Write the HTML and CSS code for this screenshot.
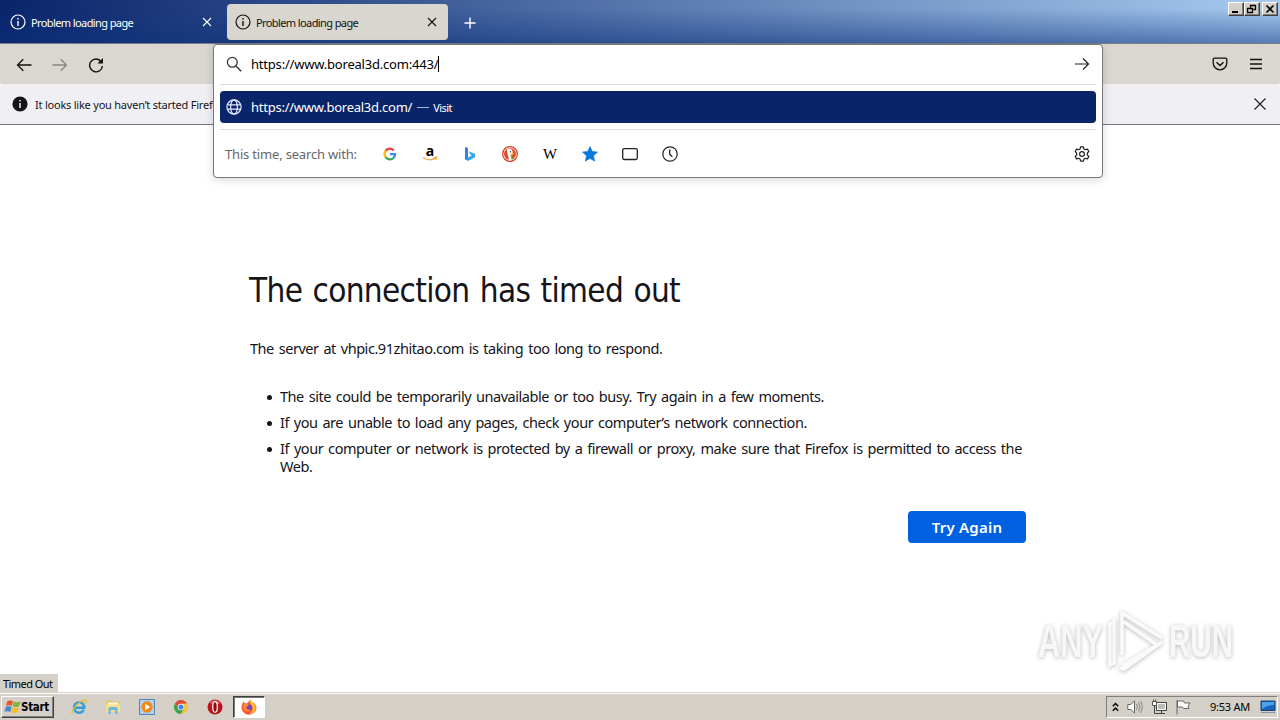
FILE: index.html
```html
<!DOCTYPE html>
<html lang="en">
<head>
<meta charset="utf-8">
<title>Problem loading page</title>
<link rel="stylesheet" href="styles.css">
</head>
<body>
<header class="tabs">
  <div class="tab">
    <svg class="i16" viewBox="0 0 16 16"><circle cx="8" cy="8" r="7" fill="none" stroke="currentColor" stroke-width="1.2"/><path d="M8 7v5M8 4v1.4" stroke="currentColor" stroke-width="1.4"/></svg>
    <span class="tab-title">Problem loading page</span>
    <svg class="close" viewBox="0 0 10 10"><path d="M1 1l8 8M9 1l-8 8" stroke="currentColor" stroke-width="1.1"/></svg>
  </div>
  <div class="tab active">
    <svg class="i16" viewBox="0 0 16 16"><circle cx="8" cy="8" r="7" fill="none" stroke="currentColor" stroke-width="1.2"/><path d="M8 7v5M8 4v1.4" stroke="currentColor" stroke-width="1.4"/></svg>
    <span class="tab-title">Problem loading page</span>
    <svg class="close" viewBox="0 0 10 10"><path d="M1 1l8 8M9 1l-8 8" stroke="currentColor" stroke-width="1.1"/></svg>
  </div>
  <svg class="plus" viewBox="0 0 12 12"><path d="M6 .5v11M.5 6h11" stroke="#fff" stroke-width="1.4"/></svg>
  <div class="controls">
    <span class="ctl"><svg viewBox="0 0 12 10"><path d="M2 8h6" stroke="#000" stroke-width="2"/></svg></span>
    <span class="ctl"><svg viewBox="0 0 12 10"><path d="M4.500 3.500v-2h5v4h-2M4 1.500h6M1.500 4.500h5v4h-5zM1 4.500h6" fill="none" stroke="#000" stroke-width="1.3"/></svg></span>
    <span class="ctl last"><svg viewBox="0 0 12 10"><path d="M2.500 1.500l7 7M9.500 1.500l-7 7" stroke="#000" stroke-width="1.7"/></svg></span>
  </div>
</header>

<nav class="toolbar">
  <svg class="i16" viewBox="0 0 16 16"><path d="M15.500 8H1.500M7.300 2.200L1.500 8l5.800 5.800" fill="none" stroke="#111" stroke-width="1.3"/></svg>
  <svg class="i16 dim" viewBox="0 0 16 16"><path d="M.5 8h14M8.700 2.200L14.500 8l-5.800 5.800" fill="none" stroke="#111" stroke-width="1.3"/></svg>
  <svg class="i16" viewBox="0 0 16 16"><path d="M13.300 4.800A6.400 6.400 0 1 0 14.400 9" fill="none" stroke="#111" stroke-width="1.4"/><path d="M15 1v5.600H9.400z" fill="#111"/></svg>
  <span class="grow"></span>
  <svg class="i16 high" viewBox="0 0 16 16"><path d="M2.500 2.200h11a1.300 1.300 0 0 1 1.300 1.300V7a6.800 6.800 0 0 1-13.600 0V3.500a1.300 1.300 0 0 1 1.300-1.300z" fill="none" stroke="#111" stroke-width="1.300"/><path d="M4.500 6.200L8 9.500l3.500-3.300" fill="none" stroke="#111" stroke-width="1.400"/></svg>
  <svg class="i16 high" viewBox="0 0 16 16"><path d="M2 3.500h12M2 8h12M2 12.500h12" stroke="#111" stroke-width="1.400"/></svg>
</nav>

<div class="notice">
  <svg class="i16" viewBox="0 0 16 16"><circle cx="8" cy="8" r="7.600" fill="#15141a"/><path d="M8 7v5M8 4v1.500" stroke="#fff" stroke-width="1.400"/></svg>
  <span class="notice-text">It looks like you haven’t started Firefox</span>
  <svg class="notice-close" viewBox="0 0 12 12"><path d="M.5 .5l11 11M11.500 .5l-11 11" stroke="#222" stroke-width="1.200"/></svg>
</div>

<main class="page">
  <h1>The connection has timed out</h1>
  <p class="lead">The server at vhpic.91zhitao.com is taking too long to respond.</p>
  <ul>
    <li class="l1">The site could be temporarily unavailable or too busy. Try again in a few moments.</li>
    <li class="l2">If you are unable to load any pages, check your computer’s network connection.</li>
    <li class="l3">If your computer or network is protected by a firewall or proxy, make sure that Firefox is permitted to access the<br>Web.</li>
  </ul>
  <div class="actions"><button class="retry">Try Again</button></div>
</main>

<footer class="taskbar">
  <div class="start">
    <svg class="flag" viewBox="0 0 17 16"><path d="M3.200 2.500Q6 .5 9 2.300L7.800 7Q5 5.600 2 7z" fill="#e8562a"/><path d="M9.800 2.600Q13 4 16.500 2.500L15 7.500Q12 8.800 8.600 7.300z" fill="#7fb53c"/><path d="M1.800 8Q5 6.500 7.600 8L6.300 13Q3.500 11.500.5 12.800z" fill="#3f86d8"/><path d="M8.400 8.300Q11.500 9.700 14.700 8.400L13.400 13.500Q10 14.800 7.100 13.300z" fill="#f6bd26"/></svg>
    <span class="start-text">Start</span>
  </div>
  <div class="apps">
    <svg viewBox="0 0 16 16"><path d="M12.800 10.800A5.200 5.200 0 1 1 13.300 8.700H4" fill="none" stroke="#2f9fdf" stroke-width="2.400"/><path d="M1.200 14.500C-.5 11 11-.5 15 1.500c1 1-.2 3-1.500 4" fill="none" stroke="#e9bd35" stroke-width="1.300"/></svg>
    <svg viewBox="0 0 16 16"><path d="M1 3l1-1.500h4l1 1h7.500V12H1z" fill="#e9c75e"/><path d="M3 3.500h10v4H3z" fill="#f8f8e8"/><path d="M1 5.500h14V13H1z" fill="#f8df8c"/><path d="M3.500 15V9.500q0-1.500 1.500-1.500h6q1.500 0 1.500 1.500V15h-2.300v-4H5.800v4z" fill="#68b8e2"/></svg>
    <svg viewBox="0 0 16 16"><path d="M.5 .5h15v15H.5z" fill="#a9ccec" stroke="#5488bc"/><path d="M3 1v14M13 1v14" stroke="#e4f1fb" stroke-dasharray="1 1"/><circle cx="8" cy="8" r="5.700" fill="#f28a17"/><path d="M6.200 4.700v6.600l5-3.300z" fill="#fff"/></svg>
    <svg viewBox="0 0 16 16"><circle cx="8" cy="8" r="7" fill="#f5c52e"/><path d="M1.900 4.500A7 7 0 0 1 14.100 4.500H8L5 9.800z" fill="#e04a3c"/><path d="M1.900 4.500A7 7 0 0 0 7.600 15L11 9.500H5z" fill="#35a554"/><circle cx="8" cy="8" r="3.300" fill="#fff"/><circle cx="8" cy="8" r="2.600" fill="#4484e8"/></svg>
    <svg viewBox="0 0 16 16"><circle cx="8" cy="8" r="7.500" fill="#b9141b"/><path d="M2.500 4a7 7 0 0 1 11 0q-5 3-11 0z" fill="#e7605e"/><ellipse cx="8" cy="8" rx="2.300" ry="5.300" fill="#8c0a10" stroke="#fff" stroke-width="1.200"/></svg>
    <span class="running"><svg viewBox="0 0 16 16"><path d="M2.600 2.300l1 2 2.400.2C8 2 8.600 1.400 9.500.5c0 1.500 1 2 2 3 1 0 3.500 2 4 4.500C15.500 12.500 12 15.700 8 15.700S.5 12.500.5 8.500c0-2.500 1-4 2.100-6.200z" fill="#ff553a"/><path d="M9.500.5c0 1.500 1 2 2 3 2.800 1.500 4 5 2.500 8-1 2-3.500 3.500-6 3.500 4-2 5-6 2-9.500C8.500 4 8.500 2 9.500.5z" fill="#ffc52d"/><circle cx="8" cy="8.400" r="3" fill="#6b45d0"/><path d="M2.500 5q2.500-1.500 5.500 1-2.500 1-2.700 2.800 1 2.600 4.700 1.700-1.500 2.500-4.500 2C2.500 12 1.500 8.500 2.500 5z" fill="#ff8a27"/></svg></span>
  </div>
  <div class="tray">
    <svg class="chev" viewBox="0 0 7 10"><path d="M.8 4.200l2.700-2.700 2.700 2.700M.8 8.700L3.500 6l2.700 2.700" fill="none" stroke="#000" stroke-width="1.500"/></svg>
    <svg class="i16" viewBox="0 0 16 16"><path d="M.8 5.500h3L7.500 2v12L3.800 10.500h-3z" fill="#fff" stroke="#666"/><path d="M9.500 5q2 3 0 6M11.500 3.300q3 4.700 0 9.400M13.500 2q3.500 6 0 12" fill="none" stroke="#888"/></svg>
    <svg class="i16" viewBox="0 0 16 16"><path d="M5.500 3.500h10v8h-10z" fill="#bbb" stroke="#444"/><path d="M6.500 4.500h8v6h-8z" fill="none" stroke="#fff"/><path d="M7 14.500h7M10.500 12v2M3.500 7v7.500H7" fill="none" stroke="#444"/><path d="M1.500 2.500h4v4h-4zM2.500 .5v2M4.500 .5v2" fill="#fff" stroke="#555"/></svg>
    <svg class="i16" viewBox="0 0 16 16"><path d="M2 1v14.500" stroke="#777" stroke-width="1.200"/><path d="M2.500 2h6l1 2h5.500l-2 3 1 2.500H8.500l-1-1.500h-5z" fill="#fff" stroke="#666"/></svg>
    <span class="clock">9:53 AM</span>
    <svg class="i16" viewBox="0 0 16 16"><path d="M1 2h14v9.500H1z" fill="#1764bf" stroke="#174071"/><path d="M2 3h12v3Q7 6 2 10z" fill="#4da1e7"/><path d="M1 13.500h14" stroke="#8095a9"/></svg>
  </div>
</footer>

<section class="urlbar">
  <div class="url-row">
    <svg class="i16" viewBox="0 0 16 16"><circle cx="6.300" cy="6.300" r="4.900" fill="none" stroke="#333" stroke-width="1.300"/><path d="M9.900 9.900l5.300 5.300" stroke="#333" stroke-width="1.400"/></svg>
    <span class="url-text">https://www.boreal3d.com:443/</span><span class="caret"></span>
    <svg class="i16 go" viewBox="0 0 16 16"><path d="M1 8h13.500M9 2.500L14.500 8 9 13.500" fill="none" stroke="#222" stroke-width="1.200"/></svg>
  </div>
  <div class="result">
    <svg class="i16" viewBox="0 0 16 16"><g fill="none" stroke="#e4ebff" stroke-width="1.200"><circle cx="8" cy="8" r="7.100"/><ellipse cx="8" cy="8" rx="3.400" ry="7.100"/><path d="M1.500 5.800h13M1.500 10.200h13"/></g></svg>
    <span class="result-url">https://www.boreal3d.com/</span>
    <span class="dash"></span>
    <span class="visit">Visit</span>
  </div>
  <div class="engines">
    <span class="engines-label">This time, search with:</span>
    <div class="engine-list">
      <svg viewBox="0 0 16 16"><g fill="none" stroke-width="2.300"><path d="M3.600 5A5.100 5.100 0 0 1 11.700 4.400" stroke="#ea4335"/><path d="M3.600 5a5.200 5.200 0 0 0 0 6" stroke="#fbbc05"/><path d="M3.600 11a5.100 5.100 0 0 0 7.800 1" stroke="#34a853"/><path d="M11.400 12A5 5 0 0 0 13 8.200H8" stroke="#4285f4"/></g></svg>
      <svg class="amazon-icon" viewBox="0 0 16 16"><text x="3.800" y="10" class="amazon">a</text><path d="M1 11.500q6.500 4.500 13 .5M12 11.300l2.800-.2-.9 2.700" fill="none" stroke="#f4a33a" stroke-width="1.200"/></svg>
      <svg viewBox="0 0 16 16"><path d="M3 1l3 1.200v9.300l4-2.300-2-.9L7 5.500l6 2.300v3.500L6 15l-3-2z" fill="#35a5f2"/><path d="M3 1l3 1.200v9.300L4.500 14 3 13z" fill="#2c7ff0"/></svg>
      <svg viewBox="0 0 16 16"><circle cx="8" cy="8" r="7.400" fill="#fff" stroke="#d43b20" stroke-width="1.200"/><circle cx="8" cy="8" r="6" fill="#df4b26"/><path d="M5 3q4-1.500 5.500 2l.2 3L9 9.200l1 4.500-3 .2Q5.500 8 5 5z" fill="#fff"/><path d="M8.200 7.800l4-.7-1 1.500-2.500.8z" fill="#fbb51b"/><path d="M9 11l2.500.2-.5 2-2-.8z" fill="#54a73c"/><circle cx="8.500" cy="5.700" r=".7" fill="#234"/></svg>
      <svg viewBox="0 0 16 16"><text x="1" y="12.500" class="wiki" textLength="14" lengthAdjust="spacingAndGlyphs">W</text></svg>
      <svg viewBox="0 0 16 16"><path d="M8 .6l2.200 4.900 5.300.6-4 3.600 1.100 5.400L8 12.400l-4.600 2.700 1.100-5.400-4-3.600 5.300-.6z" fill="#0878dc" stroke="#0878dc" stroke-width=".7" stroke-linejoin="round"/></svg>
      <svg viewBox="0 0 16 16"><rect x=".7" y="2.700" width="14.600" height="10.800" rx="1.500" fill="none" stroke="#222" stroke-width="1.300"/></svg>
      <svg viewBox="0 0 16 16"><circle cx="8" cy="8" r="7.200" fill="none" stroke="#222" stroke-width="1.200"/><path d="M7.700 3.500v4.700l2.700 2.500" fill="none" stroke="#222" stroke-width="1.300"/></svg>
    </div>
    <svg class="i16 gear" viewBox="0 0 16 16"><path d="M6.600 .8h2.800l.5 2.100 1.400.8 2.200-.6 1.300 2.400L13.300 7.100v1.800l1.500 1.600-1.300 2.400-2.200-.6-1.400.8-.5 2.100H6.600l-.5-2.100-1.400-.8-2.200.6-1.300-2.400 1.500-1.600V7.100L1.200 5.500l1.300-2.400 2.200.6 1.400-.8z" fill="none" stroke="#222" stroke-width="1.200" stroke-linejoin="round"/><circle cx="8" cy="8" r="2.400" fill="none" stroke="#222" stroke-width="1.200"/></svg>
  </div>
</section>

<div class="status">Timed Out</div>

<div class="watermark">
  <svg width="212" height="72" viewBox="0 0 212 72">
    <g class="mark-text">
      <text x="8" y="52" textLength="65" lengthAdjust="spacingAndGlyphs">ANY</text>
      <text x="139" y="52" textLength="64" lengthAdjust="spacingAndGlyphs">RUN</text>
    </g>
    <g class="mark-play"><path d="M85 17l-5 2v41l6-3M92 50V8l40 25M84 57V14M94 17l33 23M132 37L94 64l-4-1M127 40L92 61"/></g>
  </svg>
</div>
</body>
</html>
```

FILE: styles.css
```css
* { box-sizing: border-box; }
body {
  margin: 0;
  width: 1280px;
  height: 720px;
  overflow: hidden;
  position: relative;
  display: flex;
  flex-direction: column;
  background: #fff;
  color: #15141a;
  font-family: "Noto Sans", "DejaVu Sans", sans-serif;
  font-size: 11px;
  white-space: nowrap;
}
svg { display: block; flex: none; }
.i16 { width: 16px; height: 16px; }

.tabs {
  height: 44px;
  flex: none;
  display: flex;
  align-items: flex-start;
  padding-top: 4px;
  background: linear-gradient(to bottom, rgba(10,36,106,0) 20%, rgba(10,50,125,.5)), linear-gradient(to right, #0a246a, #a6caf0);
  border-bottom: 1px solid #777c88;
}
.tab {
  width: 221px;
  height: 36px;
  margin-right: 4px;
  padding: 0 11px 0 8px;
  display: flex;
  align-items: center;
  border-radius: 4px;
  color: #fff;
}
.tab:first-child { width: 223px; padding-left: 10px; }
.tab.active { background: #d9d6cf; color: #111; }
.tab-title { margin-left: 5px; flex: 1; padding-top: 1px; letter-spacing: -.6px; }
.close { width: 10px; height: 10px; }
.plus { width: 12px; height: 12px; margin: 13px 0 0 12px; }
.controls { margin: -2px 2px 0 auto; display: flex; }
.ctl {
  width: 16px;
  height: 14px;
  padding: 1px;
  background: #d4d0c8;
  border: 1px solid;
  border-color: #fff #404040 #404040 #fff;
  box-shadow: inset -1px -1px #808080;
}
.ctl svg { width: 12px; height: 10px; }
.ctl.last { margin-left: 2px; }

.toolbar {
  height: 40px;
  flex: none;
  display: flex;
  align-items: center;
  gap: 20px;
  padding: 2px 16px 0;
  background: #dad6d0;
}
.dim { opacity: .4; }
.high { margin-bottom: 2px; }
.grow { flex: 1; }
.notice {
  height: 41px;
  flex: none;
  display: flex;
  align-items: center;
  padding: 0 14px 0 12px;
  background: #f0f0f4;
  border-bottom: 1px solid #77777d;
  border-radius: 4px 4px 0 0;
}
.notice-text { margin-left: 7px; flex: 1; letter-spacing: -.22px; }
.notice-close { width: 12px; height: 12px; }

.page {
  flex: 1;
  min-height: 0;
  width: 777px;
  margin-left: 249px;
  padding-top: 143px;
  font-size: 14.5px;
  line-height: 18px;
  word-spacing: 1.5px;
}
h1 {
  margin: 0;
  font: 400 33px/46px "DejaVu Sans Condensed", "DejaVu Sans", sans-serif;
  letter-spacing: -.66px;
  word-spacing: 1.5px;
}
.lead { margin: 25px 0 30px 1px; letter-spacing: -.45px; }
ul { margin: 0; padding-left: 31px; list-style: none; }
li { margin-bottom: 8px; }
li::before {
  content: "";
  display: inline-block;
  width: 5px;
  height: 5px;
  margin: 0 8px 2px -13px;
  border-radius: 50%;
  background: #15141a;
}
.l1 { letter-spacing: -.45px; }
.l2 { letter-spacing: -.45px; }
.l3 { letter-spacing: -.43px; }
.actions { display: flex; justify-content: flex-end; padding-top: 28px; }
.retry {
  width: 118px;
  height: 32px;
  padding: 0;
  border: 0;
  border-radius: 4px;
  background: #0061e0;
  color: #fff;
  font: 600 15px "Noto Sans", sans-serif;
  letter-spacing: .25px;
}

.taskbar {
  height: 28px;
  flex: none;
  display: flex;
  align-items: center;
  padding: 1px 2px 0 1px;
  background: #d4d0c8;
  border-top: 1px solid #d4d0c8;
  box-shadow: inset 0 1px #fff;
}
.start {
  width: 53px;
  height: 22px;
  display: flex;
  align-items: center;
  padding-left: 2px;
  border: 1px solid;
  border-color: #fff #404040 #404040 #fff;
  box-shadow: inset -1px -1px #808080;
}
.flag { width: 17px; height: 16px; }
.start-text { font: bold 11.5px "DejaVu Sans Condensed", "DejaVu Sans", sans-serif; color: #000; letter-spacing: -.3px; }
.apps { display: flex; align-items: center; gap: 18px; margin-left: 17px; }
.apps svg { width: 16px; height: 16px; }
.running {
  width: 32px;
  height: 22px;
  margin-left: -8px;
  display: flex;
  align-items: center;
  justify-content: center;
  background: #fff;
  border: 1px solid;
  border-color: #404040 #fff #fff #404040;
  box-shadow: inset 1px 1px #777;
}
.tray {
  width: 172px;
  height: 22px;
  margin-left: auto;
  display: flex;
  align-items: center;
  padding: 0 0 0 5px;
  gap: 8px;
  border: 1px solid;
  border-color: #808080 #fff #fff #808080;
  color: #000;
}
.chev { width: 7px; height: 10px; }
.clock { margin: 0 1px 0 11px; padding-bottom: 2px; width: 41px; letter-spacing: -.25px; }

.urlbar {
  position: absolute;
  left: 213px;
  top: 44px;
  width: 890px;
  height: 134px;
  padding: 0 6px;
  background: #fff;
  border: 1px solid #77777c;
  border-radius: 4px;
  box-shadow: 0 2px 10px rgba(0,0,0,.16);
  font-size: 13px;
}
.url-row {
  height: 40px;
  display: flex;
  align-items: center;
  padding: 0 6px 1px;
  border-bottom: 1px solid #ddd8d2;
  color: #000;
}
.url-text, .result-url { margin-left: 9px; letter-spacing: -.2px; }
.result-url { letter-spacing: -.25px; }
.caret { width: 1px; height: 16px; background: #000; }
.go { margin-left: auto; }
.result {
  height: 32px;
  margin: 6px 0;
  display: flex;
  align-items: center;
  padding: 0 6px;
  border-radius: 4px;
  background: #0a246a;
  color: #fff;
}
.dash { width: 12px; height: 1px; margin: 0 4px 0 5px; background: #9db9e8; }
.visit { font-size: 11px; letter-spacing: -.55px; }
.engines {
  height: 49px;
  display: flex;
  align-items: center;
  padding: 0 6px 0 5px;
  border-top: 1px solid #dedee0;
}
.engines-label { width: 157px; color: #66666b; letter-spacing: -.18px; }
.engine-list { display: flex; gap: 24px; }
.engine-list svg { width: 16px; height: 16px; overflow: visible; }
.amazon { font: bold 14px "Noto Sans", sans-serif; }
.wiki { font: 14px "Liberation Serif", serif; }
.gear { margin-left: auto; }

.status {
  position: absolute;
  left: 0;
  top: 674px;
  width: 58px;
  height: 18px;
  padding-left: 3px;
  line-height: 19px;
  letter-spacing: -.55px;
  background: #d4d0c8;
  color: #000;
}
.watermark { position: absolute; left: 1030px; top: 605px; filter: drop-shadow(0 1px 2px rgba(0,0,0,.28)); }
.watermark svg { overflow: visible; }
.mark-text { font: bold 46px "Liberation Sans", sans-serif; fill: #f7f7f7; }
.mark-play { fill: none; stroke: #fafafa; stroke-width: 3.5; }
```
